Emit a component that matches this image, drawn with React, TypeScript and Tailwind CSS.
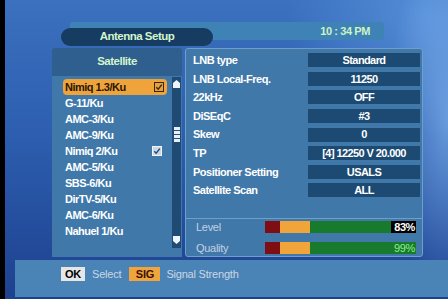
import React from "react";

const satellites = [
  { name: "Nimiq 1.3/Ku", checked: true, active: true },
  { name: "G-11/Ku" },
  { name: "AMC-3/Ku" },
  { name: "AMC-9/Ku" },
  { name: "Nimiq 2/Ku", checked: true },
  { name: "AMC-5/Ku" },
  { name: "SBS-6/Ku" },
  { name: "DirTV-5/Ku" },
  { name: "AMC-6/Ku" },
  { name: "Nahuel 1/Ku" },
];

const settings = [
  ["LNB type", "Standard"],
  ["LNB Local-Freq.", "11250"],
  ["22kHz", "OFF"],
  ["DiSEqC", "#3"],
  ["Skew", "0"],
  ["TP", "[4] 12250 V 20.000"],
  ["Positioner Setting", "USALS"],
  ["Satellite Scan", "ALL"],
];

function Check({ active }: { active?: boolean }) {
  return (
    <svg width="10" height="10" viewBox="0 0 10 10">
      <rect
        x="0.5"
        y="0.5"
        width="9"
        height="9"
        fill={active ? "#e8a13a" : "#c9d8e8"}
        stroke={active ? "#3a2608" : "#eef4fa"}
        strokeWidth="1"
      />
      <path
        d="M2.3 5.2 L4.2 7.2 L7.8 2.6"
        fill="none"
        stroke={active ? "#3a2608" : "#27486a"}
        strokeWidth="1.4"
      />
    </svg>
  );
}

function Bar({ pct, dark }: { pct: string; dark?: boolean }) {
  return (
    <div className="flex h-[12px] w-[151px]">
      <div className="w-[15px] bg-[#7e0d14]" />
      <div className="w-[30px] bg-[#f0a43a]" />
      <div className="flex-1 bg-[#177a2c] flex justify-end">
        {dark ? (
          <div className="w-[25px] bg-black text-white text-[11px] font-bold leading-[12px] text-right pr-[1px] tracking-[-0.4px]">
            {pct}
          </div>
        ) : (
          <div className="text-[#8cf08c] text-[11px] leading-[12px] text-right pr-[1px] tracking-[-0.3px]">
            {pct}
          </div>
        )}
      </div>
    </div>
  );
}

export default function App() {
  return (
    <div
      className="w-[448px] h-[299px] overflow-hidden flex flex-col border-l-[5px] border-black bg-[radial-gradient(ellipse_60px_180px_at_100%_40%,rgba(150,200,255,0.55),transparent),radial-gradient(ellipse_140px_120px_at_95%_5%,rgba(110,170,240,0.5),transparent),linear-gradient(180deg,#3b71bf_0%,#2d5eaf_45%,#1d418f_100%)]"
      style={{ fontFamily: '"Liberation Sans", Arial, sans-serif' }}
    >
      {/* title row */}
      <div className="relative mt-[22px] h-[24px] shrink-0">
        <div className="ml-[65px] w-[314px] h-[18px] bg-[#3f82b6] rounded-[3px] flex items-center justify-end pr-[14px]">
          <span className="text-[#cdf2c4] text-[11px] font-bold tracking-[-0.4px]">10 : 34 PM</span>
        </div>
        <div className="absolute left-[56px] top-[6px] w-[152px] h-[18px] rounded-full bg-[#163c62] flex items-center justify-center">
          <span className="text-[#d4f4cc] text-[11.5px] font-bold tracking-[-0.5px]">Antenna Setup</span>
        </div>
      </div>

      {/* main */}
      <div className="mt-[2px] ml-[47px] flex gap-[3px] h-[209px] shrink-0">
        {/* left panel */}
        <div className="w-[130px] flex flex-col">
          <div className="h-[28px] bg-[#2f5f8e] rounded-t-[3px] flex items-center justify-center">
            <span className="text-[#d4f4cc] text-[11.5px] font-bold tracking-[-0.5px]">Satellite</span>
          </div>
          <div className="flex-1 bg-[#4178aa] flex">
            <div className="w-[120px] pt-[3px] pl-[11px]">
              {satellites.map((s) => (
                <div
                  key={s.name}
                  className={
                    "h-[16px] w-[104px] flex items-center justify-between px-[2px] text-[11px] font-bold tracking-[-0.5px] " +
                    (s.active ? "bg-[#eea43a] rounded-[4px] text-[#2a1606]" : "text-white")
                  }
                >
                  <span>{s.name}</span>
                  {s.checked ? (
                    <span className={"flex " + (s.active ? "mr-[1px]" : "mr-[3px]")}>
                      <Check active={s.active} />
                    </span>
                  ) : null}
                </div>
              ))}
            </div>
            <div className="w-[9px] mt-[1px] h-[171px] bg-[#1f4a74] flex flex-col items-center pt-[3px] pb-[4px]">
              <svg width="7" height="8" viewBox="0 0 7 8">
                <path d="M0 3 L3.5 0 L7 3 L7 8 L0 8 Z" fill="#eef4fb" />
              </svg>
              <div className="mt-[39px] w-[6px] h-[15px] bg-[#e6eef7] flex flex-col justify-center gap-[3px]">
                <div className="h-[1px] bg-[#2a4f74]" />
                <div className="h-[1px] bg-[#2a4f74]" />
                <div className="h-[1px] bg-[#2a4f74]" />
              </div>
              <div className="flex-1" />
              <svg width="7" height="8" viewBox="0 0 7 8">
                <path d="M0 0 L7 0 L7 5 L3.5 8 L0 5 Z" fill="#eef4fb" />
              </svg>
            </div>
          </div>
        </div>

        {/* right panel */}
        <div className="w-[238px] flex flex-col border border-[#6e9fca] rounded-[3px] bg-[#4178aa]">
          <div className="flex-1 pt-[2px]">
            {settings.map(([k, v]) => (
              <div key={k} className="h-[18.6px] flex items-center justify-between pl-[7px] pr-[2px]">
                <span className="text-white text-[11px] font-bold tracking-[-0.5px]">{k}</span>
                <div className="w-[112px] h-[14px] bg-[#1c4a72] flex items-center justify-center text-white text-[11px] font-bold tracking-[-0.6px]">
                  {v}
                </div>
              </div>
            ))}
          </div>
          <div className="h-[38px] border-t border-[#6e9fca] flex flex-col justify-center gap-[4px] pl-[10px] pr-[6px]">
            <div className="flex items-center justify-between">
              <span className="text-[#c2d2e2] text-[11px] tracking-[-0.3px]">Level</span>
              <Bar pct="83%" dark />
            </div>
            <div className="flex items-center justify-between">
              <span className="text-[#c2d2e2] text-[11px] tracking-[-0.3px]">Quality</span>
              <Bar pct="99%" />
            </div>
          </div>
        </div>
      </div>

      {/* bottom bar */}
      <div className="mt-[3px] ml-[10px] h-[37px] bg-[#4a83b6] flex items-start pt-[7px] pl-[46px] text-[11px] shrink-0">
        <div className="h-[14px] w-[24px] bg-[#e6e6e6] text-black font-bold flex items-center justify-center tracking-[-0.3px]">OK</div>
        <span className="ml-[7px] text-[#cad7e4] leading-[14px] tracking-[-0.2px]">Select</span>
        <div className="ml-[8px] h-[14px] w-[31px] bg-[#f0a43a] text-[#3a1004] font-bold flex items-center justify-center tracking-[-0.3px]">SIG</div>
        <span className="ml-[6px] text-[#cad7e4] leading-[14px] tracking-[-0.2px]">Signal Strength</span>
      </div>
    </div>
  );
}
